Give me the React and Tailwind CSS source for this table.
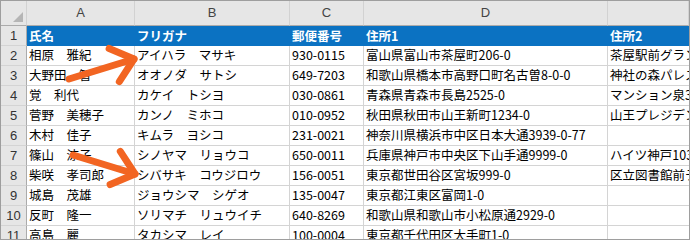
import React from "react";

const rows = [
  ["相原　雅紀", "アイハラ　マサキ", "930-0115", "富山県富山市茶屋町206-0", "茶屋駅前グランドハイツ"],
  ["大野田　智", "オオノダ　サトシ", "649-7203", "和歌山県橋本市高野口町名古曽8-0-0", "神社の森パレス"],
  ["覚　利代", "カケイ　トシヨ", "030-0861", "青森県青森市長島2525-0", "マンション泉303"],
  ["菅野　美穂子", "カンノ　ミホコ", "010-0952", "秋田県秋田市山王新町1234-0", "山王プレジデンス"],
  ["木村　佳子", "キムラ　ヨシコ", "231-0021", "神奈川県横浜市中区日本大通3939-0-77", ""],
  ["篠山　涼子", "シノヤマ　リョウコ", "650-0011", "兵庫県神戸市中央区下山手通9999-0", "ハイツ神戸1031"],
  ["柴咲　孝司郎", "シバサキ　コウジロウ", "156-0051", "東京都世田谷区宮坂999-0", "区立図書館前テラス"],
  ["城島　茂雄", "ジョウシマ　シゲオ", "135-0047", "東京都江東区富岡1-0", ""],
  ["反町　隆一", "ソリマチ　リュウイチ", "640-8269", "和歌山県和歌山市小松原通2929-0", ""],
  ["高島　麗", "タカシマ　レイ", "100-0004", "東京都千代田区大手町1-0", ""],
];

const font = { fontFamily: '"Noto Sans CJK JP", "Noto Sans", sans-serif' };

function HeadCell({ children }) {
  return (
    <div className="h-[25px] bg-[#e6e6e6] border-r border-b border-r-[#d2d2d2] border-b-[#ababab] flex items-center justify-center text-[13px] text-[#444] font-['Liberation_Sans',sans-serif]">
      {children}
    </div>
  );
}

function RowHead({ children }) {
  return (
    <div className="h-[20px] bg-[#e6e6e6] border-r border-b border-r-[#ababab] border-b-[#d4d4d4] flex items-center justify-center text-[13px] text-[#333] font-['Liberation_Sans',sans-serif]">
      {children}
    </div>
  );
}

function Cell({ children, last }) {
  return (
    <div
      className={
        "h-[20px] border-b border-[#d4d4d4] flex items-center pl-[2px] text-[12.5px] text-black whitespace-nowrap overflow-hidden " +
        (last ? "" : "border-r")
      }
    >
      {children}
    </div>
  );
}

function BlueCell({ children }) {
  return (
    <div className="h-[20px] bg-[#0b72c2] flex items-center pl-[2px] text-[12.5px] text-white font-bold whitespace-nowrap overflow-hidden">
      {children}
    </div>
  );
}

function Arrow({ x1, y1, x2, y2 }) {
  const ang = Math.atan2(y1 - y2, x1 - x2);
  const len = 27;
  const spread = (40 * Math.PI) / 180;
  const a1 = [x2 + len * Math.cos(ang + spread), y2 + len * Math.sin(ang + spread)];
  const a2 = [x2 + len * Math.cos(ang - spread), y2 + len * Math.sin(ang - spread)];
  return (
    <g stroke="#f26522" strokeWidth="7" strokeLinecap="round" strokeLinejoin="round" fill="none">
      <line x1={x1} y1={y1} x2={x2} y2={y2} />
      <polyline points={`${a1[0]},${a1[1]} ${x2},${y2} ${a2[0]},${a2[1]}`} />
    </g>
  );
}

export default function App() {
  return (
    <div className="w-[690px] h-[240px] overflow-hidden relative bg-white border border-[#9e9e9e]" style={font}>
      <div className="grid grid-cols-[26px_108px_155px_74px_244px_81px]">
        <div className="h-[25px] bg-[#e6e6e6] border-r border-b border-r-[#d2d2d2] border-b-[#ababab] relative">
          <div className="absolute right-[3px] bottom-[3px] w-0 h-0 border-l-[10px] border-l-transparent border-b-[10px] border-b-[#b5b5b5]" />
        </div>
        <HeadCell>A</HeadCell>
        <HeadCell>B</HeadCell>
        <HeadCell>C</HeadCell>
        <HeadCell>D</HeadCell>
        <HeadCell></HeadCell>

        <RowHead>1</RowHead>
        <BlueCell>氏名</BlueCell>
        <BlueCell>フリガナ</BlueCell>
        <BlueCell>郵便番号</BlueCell>
        <BlueCell>住所1</BlueCell>
        <BlueCell>住所2</BlueCell>

        {rows.map((r, i) => (
          <React.Fragment key={i}>
            <RowHead>{i + 2}</RowHead>
            <Cell>{r[0]}</Cell>
            <Cell>{r[1]}</Cell>
            <Cell>{r[2]}</Cell>
            <Cell>{r[3]}</Cell>
            <Cell last>{r[4]}</Cell>
          </React.Fragment>
        ))}
      </div>
      <svg className="absolute left-0 top-0 pointer-events-none" width="690" height="240" viewBox="-1 -1 690 240">
        <Arrow x1={67} y1={77} x2={132} y2={57} />
        <Arrow x1={71} y1={153} x2={133} y2={172} />
      </svg>
    </div>
  );
}
